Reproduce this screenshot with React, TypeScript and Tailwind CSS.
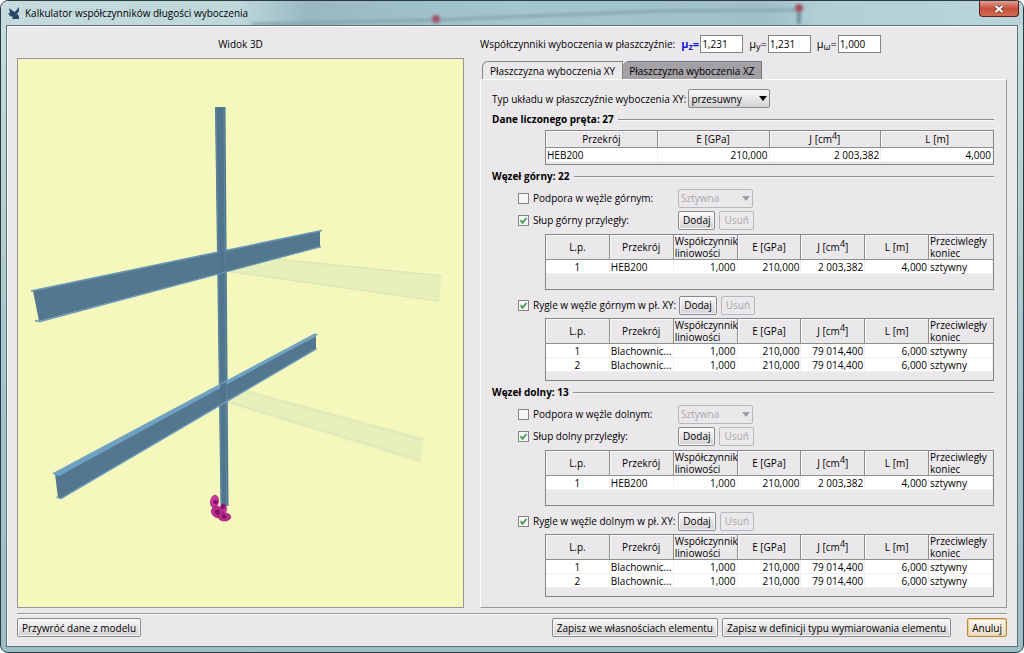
import React from "react";

type Align = "left" | "center" | "right";

type Column = {
  label: React.ReactNode;
  align: Align;
  wrap?: boolean;
};

const alignClass = {
  left: "text-left",
  center: "text-center",
  right: "text-right",
};

const inertia = (
  <span>
    J [cm<sup className="text-[9px] leading-none">4</sup>]
  </span>
);

const memberColumns: Column[] = [
  { label: "Przekrój", align: "left" },
  { label: "E [GPa]", align: "right" },
  { label: inertia, align: "right" },
  { label: "L [m]", align: "right" },
];

const nodeColumns: Column[] = [
  { label: "L.p.", align: "center" },
  { label: "Przekrój", align: "left" },
  { label: "Współczynnik liniowości", align: "right", wrap: true },
  { label: "E [GPa]", align: "right" },
  { label: inertia, align: "right" },
  { label: "L [m]", align: "right" },
  { label: "Przeciwległy koniec", align: "left", wrap: true },
];

const memberRows = [["HEB200", "210,000", "2 003,382", "4,000"]];

const columnRows = [
  ["1", "HEB200", "1,000", "210,000", "2 003,382", "4,000", "sztywny"],
];

const beamRows = [
  ["1", "Blachownic...", "1,000", "210,000", "79 014,400", "6,000", "sztywny"],
  ["2", "Blachownic...", "1,000", "210,000", "79 014,400", "6,000", "sztywny"],
];

const Button = ({
  children,
  disabled,
  primary,
}: {
  children: React.ReactNode;
  disabled?: boolean;
  primary?: boolean;
}) => {
  const look = disabled
    ? "border-[#b9b7bb] text-[#a9a7ab]"
    : primary
      ? "border-[#b08d4a] bg-linear-to-b from-[#fffaf0] to-[#e6dccb] shadow-[inset_0_0_0_1px_#f5cf86]"
      : "border-[#8b898d] bg-linear-to-b from-[#fbfafb] to-[#d3d1d4] shadow-[inset_0_0_0_1px_#f7f6f8]";
  return (
    <button
      type="button"
      disabled={disabled}
      className={`h-[19px] rounded-[2px] border px-1 leading-4 whitespace-nowrap ${look}`}
    >
      {children}
    </button>
  );
};

const Select = ({
  id,
  value,
  disabled,
}: {
  id: string;
  value: string;
  disabled?: boolean;
}) => {
  return (
    <div className={`relative ${disabled ? "w-[75px]" : "w-[82px]"}`}>
      <select
        id={id}
        disabled={disabled}
        className={`block h-[19px] w-full appearance-none rounded-[2px] border px-[2px] leading-4 ${
          disabled
            ? "border-[#b9b7bb] text-[#a9a7ab]"
            : "border-[#8b898d] bg-linear-to-b from-[#fbfafb] to-[#d3d1d4]"
        }`}
      >
        <option>{value}</option>
      </select>
      <svg
        viewBox="0 0 8 5"
        className={`pointer-events-none absolute top-[7px] right-[3px] h-[5px] w-2 ${
          disabled ? "fill-[#a09ea2]" : "fill-black"
        }`}
      >
        <path d="M0 0h8L4 5z" />
      </svg>
    </div>
  );
};

const CheckRow = ({
  id,
  label,
  checked,
  children,
}: {
  id: string;
  label: string;
  checked?: boolean;
  children: React.ReactNode;
}) => {
  return (
    <div className="flex h-[22px] items-center pl-[26px]">
      <div className="flex min-w-[160px] items-center gap-1 pr-[3px]">
        <span className="relative flex">
          <input
            id={id}
            type="checkbox"
            defaultChecked={checked}
            className="peer size-[11px] appearance-none border border-[#858388] bg-[#f6f5f7]"
          />
          <svg
            viewBox="0 0 11 11"
            className="pointer-events-none absolute inset-0 hidden size-[11px] peer-checked:block"
          >
            <path
              d="M2.5 5.2l2 2.6 4-4.8"
              fill="none"
              stroke="#3f9d4b"
              strokeWidth="1.8"
            />
          </svg>
        </span>
        <label htmlFor={id} className="whitespace-nowrap">
          {label}
        </label>
      </div>
      <div className="flex items-center gap-1">{children}</div>
    </div>
  );
};

const Heading = ({ children }: { children: React.ReactNode }) => {
  return (
    <div className="flex h-[22px] items-center gap-1">
      <h2 className="font-bold whitespace-nowrap">{children}</h2>
      <div className="h-px flex-1 bg-[#8f8d91] shadow-[0_1px_0_#faf9fb]" />
    </div>
  );
};

const DataTable = ({
  columns,
  rows,
  short,
  pad,
}: {
  columns: Column[];
  rows: string[][];
  short?: boolean;
  pad: string;
}) => {
  return (
    <div className={`ml-[53px] border border-[#858388] ${pad}`}>
      <table className="w-full table-fixed border-separate border-spacing-0">
        <thead>
          <tr>
            {columns.map((col, i) => (
              <th
                key={i}
                className="border-r border-b border-[#8f8d91] p-0 font-normal shadow-[inset_1px_1px_0_#faf9fb] last:border-r-0"
              >
                <div
                  className={`flex items-center leading-[12px] ${
                    short ? "h-4" : "h-6"
                  } ${col.wrap ? "pl-px text-left" : "justify-center"}`}
                >
                  {col.label}
                </div>
              </th>
            ))}
          </tr>
        </thead>
        <tbody>
          {rows.map((row, i) => (
            <tr key={i}>
              {row.map((cell, j) => (
                <td
                  key={j}
                  className={`h-[14px] border-r border-b border-[#f1eff2] bg-white px-px pt-px pb-0 leading-[12px] whitespace-nowrap ${
                    alignClass[columns[j].align]
                  }`}
                >
                  {cell}
                </td>
              ))}
            </tr>
          ))}
        </tbody>
      </table>
    </div>
  );
};

const NodeSection = ({
  id,
  title,
  support,
  column,
  beams,
}: {
  id: string;
  title: string;
  support: string;
  column: string;
  beams: string;
}) => {
  return (
    <section>
      <Heading>{title}</Heading>
      <CheckRow id={`${id}-support`} label={support}>
        <Select id={`${id}-support-type`} value="Sztywna" disabled />
      </CheckRow>
      <CheckRow id={`${id}-column`} label={column} checked>
        <Button>Dodaj</Button>
        <Button disabled>Usuń</Button>
      </CheckRow>
      <div className="pt-[3px] pb-1">
        <DataTable columns={nodeColumns} rows={columnRows} pad="pb-[15px]" />
      </div>
      <CheckRow id={`${id}-beams`} label={beams} checked>
        <Button>Dodaj</Button>
        <Button disabled>Usuń</Button>
      </CheckRow>
      <div className="pt-[2px]">
        <DataTable columns={nodeColumns} rows={beamRows} pad="pb-2" />
      </div>
    </section>
  );
};

const View3D = () => {
  return (
    <svg viewBox="18 59 445 548" className="h-full w-full">
      <g fill="#e7efbb" stroke="#dce4b6">
        <path d="M226 253L442 275L439 302L226 272z" stroke="none" />
        <path d="M226 254L442 276M226 271L439 301" />
        <path d="M226 384L424 438L421 463L226 403z" stroke="none" />
        <path d="M226 386L423 440M226 401L421 460" />
      </g>
      <path d="M215 107H225.5L228.5 506H220.5z" fill="#50758d" />
      <path d="M216 107L221.5 506" stroke="#5e8ba8" />
      <path d="M224 107L226.5 506" stroke="#5e8ba8" />
      <path d="M33 291L320 231V247L39 321z" fill="#54778f" />
      <path d="M31 291L322 230.500" stroke="#6596b5" strokeWidth="1.6" />
      <path d="M35 320.500L40 321.500L321 246.500" fill="none" stroke="#6596b5" strokeWidth="1.3" />
      <path d="M55 474L316 336V349.500L61 499L58 498z" fill="#54778f" />
      <path d="M53 473.500L314.500 334L317.500 334.500L59 475.500z" fill="#6ea1c2" stroke="#6ea1c2" />
      <path d="M56 497L61 498.500L317 348.500" fill="none" stroke="#6ea1c2" strokeWidth="1.3" />
      <path d="M218.500 252L225 250L225.500 270L219.500 273z" fill="#4f738b" />
      <path d="M220 385L226.500 382L227 400L220.500 402z" fill="#4f738b" />
      <path d="M225 251v20M226.500 382v18" stroke="#6189a2" strokeWidth="0.8" />
      <g fill="#c33a9c" stroke="#a5127f" strokeWidth="0.7">
        <ellipse cx="214.500" cy="501.500" rx="4" ry="6.300" transform="rotate(8 214.500 501.500)" />
        <ellipse cx="223.500" cy="509" rx="3" ry="5" />
        <ellipse cx="217.500" cy="512" rx="6.300" ry="5.500" fill="#b33089" transform="rotate(35 217.500 512)" />
        <ellipse cx="224.500" cy="517" rx="6.300" ry="4" fill="#b33089" />
      </g>
      <g fill="#8a0c72">
        <circle cx="215.500" cy="502" r="2.300" />
        <circle cx="223" cy="506.500" r="2.300" />
        <circle cx="217.500" cy="512" r="2.600" />
        <circle cx="224" cy="516.500" r="2.300" />
      </g>
    </svg>
  );
};

const TitleBar = () => {
  return (
    <header className="relative flex h-6 shrink-0 items-center gap-[5px] pl-[7px] text-black">
      <svg
        viewBox="0 0 1022 24"
        preserveAspectRatio="none"
        className="absolute inset-0 h-full w-full"
      >
        <defs>
          <filter id="soft" x="-20%" y="-20%" width="140%" height="140%">
            <feGaussianBlur stdDeviation="1.6" />
          </filter>
          <linearGradient id="glass">
            <stop offset="0" stopColor="#c4dadd" />
            <stop offset="0.23" stopColor="#bfd8dc" />
            <stop offset="0.3" stopColor="#98b9c3" />
            <stop offset="0.5" stopColor="#a4c6ce" />
            <stop offset="0.75" stopColor="#9fc0c8" />
            <stop offset="0.8" stopColor="#b1cfd5" />
            <stop offset="1" stopColor="#b9d5da" />
          </linearGradient>
        </defs>
        <path d="M7 0h1008a7 7 0 0 1 7 7v17H0V7a7 7 0 0 1 7-7z" fill="url(#glass)" />
        <g filter="url(#soft)">
          <path d="M250 23L436 19L660 10L800 9" fill="none" stroke="#7fa3ac" strokeWidth="2.500" />
          <path d="M798 9v14" stroke="#6d919c" strokeWidth="4" />
          <circle cx="435" cy="18" r="4" fill="#a04e62" />
          <circle cx="798" cy="7" r="4" fill="#a04e62" />
        </g>
      </svg>
      <svg viewBox="0 0 12 12" className="relative size-3 fill-[#27476b]">
        <path d="M1 1l4 3 2 1 4-5v4L9 7l2 2v3H4l1-2-3-1-2-3h2z" />
      </svg>
      <h1 className="relative">Kalkulator współczynników długości wyboczenia</h1>
      <button
        type="button"
        aria-label="Zamknij"
        className="absolute top-0 right-1 flex h-4 w-10 items-center justify-center rounded-b-[4px] border border-t-0 border-[#5a1f1b] bg-linear-to-b from-[#e0a090] via-[#c4503c] to-[#cf6a50]"
      >
        <svg viewBox="0 0 10 8" className="h-2 w-[10px]">
          <path d="M1.500 1l7 6M8.500 1l-7 6" stroke="#6b3a36" strokeWidth="3.400" />
          <path d="M1.500 1l7 6M8.500 1l-7 6" stroke="#fff" strokeWidth="2" />
        </svg>
      </button>
    </header>
  );
};

const Factor = ({
  id,
  sub,
  value,
  active,
}: {
  id: string;
  sub: string;
  value: string;
  active?: boolean;
}) => {
  return (
    <div className="flex items-center gap-px">
      <label
        htmlFor={id}
        className={`text-[11px] whitespace-nowrap ${active ? "font-bold text-[#1a12e0]" : ""}`}
      >
        μ<sub className="text-[9px]">{sub}</sub>=
      </label>
      <input
        id={id}
        defaultValue={value}
        className="h-[18px] w-[43px] border border-[#858388] bg-white px-px"
      />
    </div>
  );
};

const App = () => {
  return (
    <div className="flex min-h-screen flex-col rounded-lg border border-[#2b3a42] bg-linear-to-b from-[#c8dfe2] via-[#a9c7cc] to-[#9cbfc6] font-['Open_Sans','Noto_Sans',sans-serif] text-[10px] leading-[14px] text-black">
      <TitleBar />
      <main className="mx-[5px] mb-[5px] flex flex-1 flex-col border border-[#5f7076] bg-[#ebe8ec] px-[10px] shadow-[inset_1px_1px_0_#fbfafc]">
        <div className="grid flex-1 grid-cols-[447fr_527fr] gap-4">
          <section className="flex min-w-0 flex-col">
            <h2 className="flex h-8 items-center justify-center pt-1">Widok 3D</h2>
            <div className="h-0 flex-1 border border-[#98969a] bg-[#f4f8bc]">
              <View3D />
            </div>
          </section>
          <section className="flex min-w-0 flex-col">
            <div className="flex h-[35px] items-center gap-[6px]">
              <span className="whitespace-nowrap">
                Współczynniki wyboczenia w płaszczyźnie:
              </span>
              <Factor id="mu-z" sub="z" value="1,231" active />
              <Factor id="mu-y" sub="y" value="1,231" />
              <Factor id="mu-w" sub="ω" value="1,000" />
            </div>
            <div role="tablist" className="flex h-[18px] pl-[2px]">
              <button
                type="button"
                role="tab"
                aria-selected="true"
                className="rounded-tl-md border border-b-0 border-[#858388] px-[7px] whitespace-nowrap"
              >
                Płaszczyzna wyboczenia XY
              </button>
              <button
                type="button"
                role="tab"
                aria-selected="false"
                className="rounded-tl-md border border-b-0 border-l-0 border-[#77757a] bg-[#a3a1a5] px-[6px] whitespace-nowrap"
              >
                Płaszczyzna wyboczenia XZ
              </button>
            </div>
            <div
              role="tabpanel"
              className="flex-1 border border-t-white border-r-[#98969a] border-b-[#98969a] border-l-white pt-[9px] pr-3 pb-[9px] pl-[11px]"
            >
              <div className="flex items-center gap-[2px]">
                <label htmlFor="layout-type" className="whitespace-nowrap">
                  Typ układu w płaszczyźnie wyboczenia XY:
                </label>
                <Select id="layout-type" value="przesuwny" />
              </div>
              <Heading>Dane liczonego pręta: 27</Heading>
              <DataTable columns={memberColumns} rows={memberRows} short pad="pb-[2px]" />
              <NodeSection
                id="top"
                title="Węzeł górny: 22"
                support="Podpora w węźle górnym:"
                column="Słup górny przyległy:"
                beams="Rygle w węźle górnym w pł. XY:"
              />
              <NodeSection
                id="bottom"
                title="Węzeł dolny: 13"
                support="Podpora w węźle dolnym:"
                column="Słup dolny przyległy:"
                beams="Rygle w węźle dolnym w pł. XY:"
              />
            </div>
          </section>
        </div>
        <footer className="mt-[5px] flex items-center gap-1 border-t border-[#98969a] pt-1 pb-[9px] shadow-[inset_0_1px_0_#faf9fb]">
          <Button>Przywróć dane z modelu</Button>
          <div className="flex-1" />
          <Button>Zapisz we własnościach elementu</Button>
          <Button>Zapisz w definicji typu wymiarowania elementu</Button>
          <div className="ml-3 flex">
            <Button primary>Anuluj</Button>
          </div>
        </footer>
      </main>
    </div>
  );
};

export default App;
